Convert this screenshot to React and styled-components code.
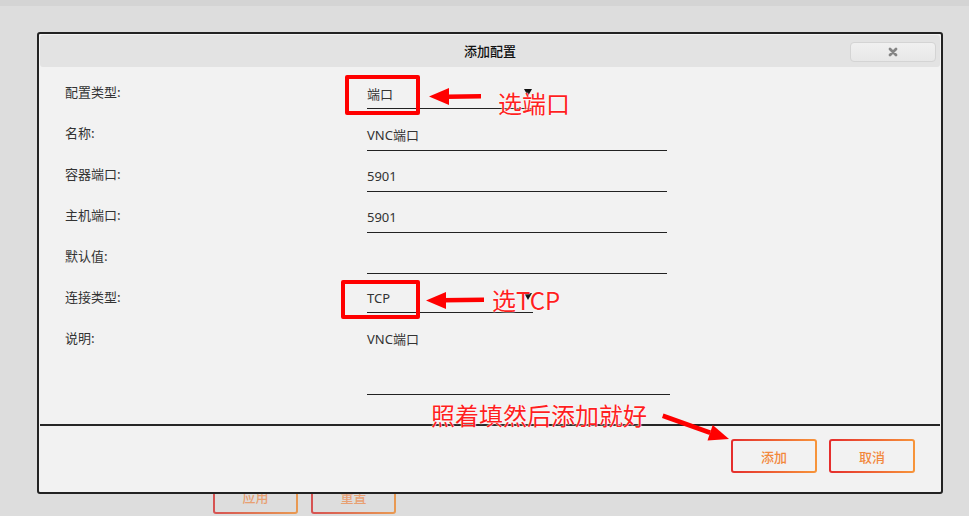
import React from "react";
import styled, { createGlobalStyle } from "styled-components";

const GlobalStyle = createGlobalStyle`
  html, body { margin: 0; padding: 0; }
  body {
    background: #dddddd;
    font-family: "Noto Sans", "Noto Sans CJK SC", sans-serif;
    color: #333;
    overflow: hidden;
  }
`;

const Page = styled.div`
  position: relative;
  width: 969px;
  height: 516px;
  background: #dddddd;
  border-top: 6px solid #d4d4d4;
  box-sizing: border-box;
  overflow: hidden;
`;

const BackActions = styled.div`
  display: flex;
  gap: 13px;
  padding: 476px 0 0 213px;
`;

const BackButton = styled.div`
  width: 85px;
  height: 32px;
  box-sizing: border-box;
  display: flex;
  align-items: center;
  justify-content: center;
  padding-bottom: 4px;
  border: 2px solid transparent;
  border-radius: 3px;
  background: linear-gradient(#dddddd, #dddddd) padding-box,
    linear-gradient(90deg, #d65252, #e99a52) border-box;
  color: #e8a072;
  font-family: "Noto Sans CJK SC", sans-serif;
  font-size: 13px;
  font-weight: 500;
`;

const Dialog = styled.div`
  position: absolute;
  left: 37px;
  top: 26px;
  width: 906px;
  height: 462px;
  box-sizing: border-box;
  border: 2px solid #222;
  border-radius: 3px;
  background: #f2f2f2;
  display: flex;
  flex-direction: column;
`;

const TitleBar = styled.div`
  margin: 1px 1px 0;
  height: 32px;
  background: #e3e3e3;
  border-radius: 3px;
  display: flex;
  align-items: center;
  justify-content: center;
  position: relative;
`;

const Title = styled.div`
  font-family: "Noto Sans CJK SC", sans-serif;
  font-size: 13px;
  font-weight: 500;
  color: #111;
  line-height: 20px;
`;

const CloseButton = styled.div`
  position: absolute;
  right: 4px;
  top: 7px;
  width: 86px;
  height: 20px;
  box-sizing: border-box;
  border: 1px solid #d4d4d4;
  border-radius: 4px;
  background: linear-gradient(#f0f0f0, #e7e7e7);
  display: flex;
  align-items: center;
  justify-content: center;
`;

const FormBody = styled.div`
  display: flex;
  flex-direction: column;
  padding: 15px 0 0 26px;
`;

const Row = styled.div`
  display: grid;
  grid-template-columns: 302px 1fr;
  height: ${(p) => (p.$tall ? "67px" : "41px")};
`;

const Label = styled.div`
  font-family: "Noto Sans CJK SC", sans-serif;
  font-size: 13px;
  line-height: 20px;
  color: #333;
`;

const Field = styled.div`
  width: ${(p) => p.$w || 300}px;
  height: ${(p) => p.$h || 28}px;
  box-sizing: border-box;
  border-bottom: 1px solid #222;
  display: flex;
  align-items: ${(p) => (p.$top ? "flex-start" : "center")};
  justify-content: space-between;
  padding-top: ${(p) => (p.$top ? "1px" : "0")};
  padding-bottom: ${(p) => (p.$top ? "0" : "3px")};
  font-family: "Noto Sans", "Noto Sans CJK SC", sans-serif;
  font-size: 13px;
  line-height: 20px;
  color: #333;
`;

const Caret = styled.span`
  width: 0;
  height: 0;
  border-left: 4px solid transparent;
  border-right: 4px solid transparent;
  border-top: 7px solid #111;
  margin-right: 1px;
  margin-bottom: 3px;
`;

const Divider = styled.div`
  margin: 29px 1px 0;
  height: 2px;
  background: #262626;
`;

const Footer = styled.div`
  display: flex;
  justify-content: flex-end;
  gap: 12px;
  padding: 13px 26px 0 0;
`;

const ActionButton = styled.div`
  width: 86px;
  height: 34px;
  box-sizing: border-box;
  display: flex;
  align-items: center;
  justify-content: center;
  border: 2px solid transparent;
  border-radius: 3px;
  background: linear-gradient(#f2f2f2, #f2f2f2) padding-box,
    linear-gradient(90deg, #e52d2d, #f7953a) border-box;
  color: #f2883c;
  font-family: "Noto Sans CJK SC", sans-serif;
  font-size: 13px;
  font-weight: 500;
`;

const RedBox = styled.div`
  position: absolute;
  box-sizing: border-box;
  border: 4px solid #ff0000;
  border-radius: 2px;
  left: ${(p) => p.$x}px;
  top: ${(p) => p.$y}px;
  width: ${(p) => p.$w}px;
  height: ${(p) => p.$h}px;
`;

const Note = styled.div`
  position: absolute;
  left: ${(p) => p.$x}px;
  top: ${(p) => p.$y}px;
  font-family: "Noto Sans CJK SC", sans-serif;
  font-size: 24px;
  line-height: 24px;
  color: #ff1f1f;
  white-space: nowrap;
  text-shadow: 0 0 2px #fff, 0 0 1px #fff;
`;

const ArrowLayer = styled.svg`
  position: absolute;
  left: 0;
  top: -6px;
  pointer-events: none;
`;

const fields = [
  { label: "配置类型:", value: "端口", select: true, w: 166, h: 27 },
  { label: "名称:", value: "VNC端口" },
  { label: "容器端口:", value: "5901" },
  { label: "主机端口:", value: "5901" },
  { label: "默认值:", value: "" },
  { label: "连接类型:", value: "TCP", select: true, w: 166, h: 26 },
];

export default function App() {
  return (
    <>
      <GlobalStyle />
      <Page>
        <BackActions>
          <BackButton>应用</BackButton>
          <BackButton>重置</BackButton>
        </BackActions>

        <Dialog>
          <TitleBar>
            <Title>添加配置</Title>
            <CloseButton>
              <svg width="10" height="10" viewBox="0 0 10 10">
                <path d="M2 2 L8 8 M8 2 L2 8" stroke="#858585" strokeWidth="2.8" strokeLinecap="round" />
              </svg>
            </CloseButton>
          </TitleBar>

          <FormBody>
            {fields.map((f) => (
              <Row key={f.label}>
                <Label>{f.label}</Label>
                <Field $w={f.w} $h={f.h}>
                  <span>{f.value}</span>
                  {f.select && <Caret />}
                </Field>
              </Row>
            ))}
            <Row $tall>
              <Label>说明:</Label>
              <Field $w={303} $h={67} $top>
                <span>VNC端口</span>
              </Field>
            </Row>
          </FormBody>

          <Divider />

          <Footer>
            <ActionButton>添加</ActionButton>
            <ActionButton>取消</ActionButton>
          </Footer>
        </Dialog>

        <RedBox $x={345} $y={69} $w={75} $h={40} />
        <RedBox $x={341} $y={274} $w={79} $h={39} />

        <Note $x={498} $y={85}>选端口</Note>
        <Note $x={492} $y={282}>选TCP</Note>
        <Note $x={431} $y={397}>照着填然后添加就好</Note>

        <ArrowLayer width="969" height="516" viewBox="0 0 969 516">
          <g fill="#ff0000" stroke="none">
            <path d="M481 94 L447 94.5 L447 99 L481 98.5 Z" />
            <path d="M429 96.5 L449 88 L449 105 Z" />
            <path d="M484 297.5 L443 298 L443 302.5 L484 302 Z" />
            <path d="M426 300.5 L446 292 L446 309 Z" />
            <path d="M663.5 413.5 L711 430.5 L709.5 435 L662 418 Z" />
            <path d="M729 439 L712.7 425 L707.5 440.5 Z" />
          </g>
        </ArrowLayer>
      </Page>
    </>
  );
}
